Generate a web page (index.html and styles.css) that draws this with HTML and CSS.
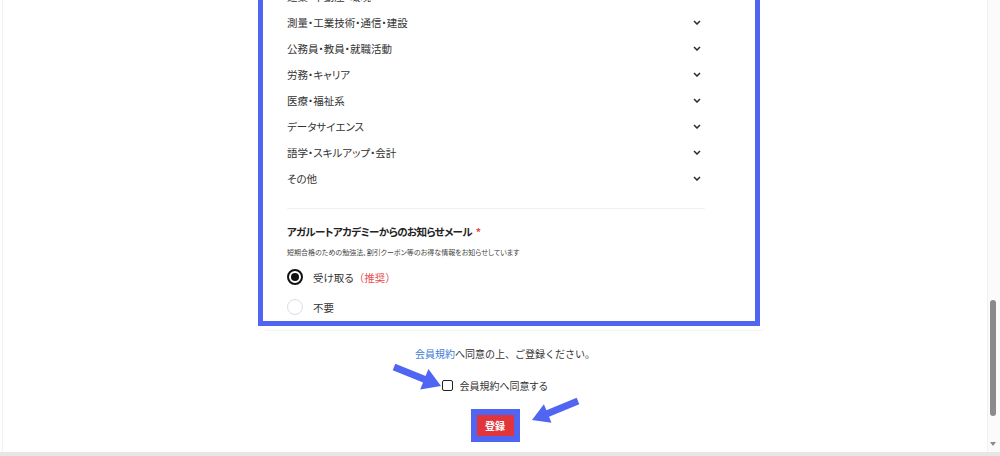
FILE: index.html
```html
<!DOCTYPE html>
<html lang="ja">
<head>
<meta charset="utf-8">
<title>会員登録</title>
<link rel="stylesheet" href="styles.css">
</head>
<body>
<div class="window">
  <div class="viewport">
    <div class="main">
      <div class="form-box">
        <div class="form-inner">
          <ul class="cats">
            <li class="cat"><span>建築・不動産・環境</span><svg class="chev" viewBox="0 0 8 5"><path d="M1 1 L4 4 L7 1"/></svg></li>
            <li class="cat"><span>測量・工業技術・通信・建設</span><svg class="chev" viewBox="0 0 8 5"><path d="M1 1 L4 4 L7 1"/></svg></li>
            <li class="cat"><span>公務員・教員・就職活動</span><svg class="chev" viewBox="0 0 8 5"><path d="M1 1 L4 4 L7 1"/></svg></li>
            <li class="cat"><span>労務・キャリア</span><svg class="chev" viewBox="0 0 8 5"><path d="M1 1 L4 4 L7 1"/></svg></li>
            <li class="cat"><span>医療・福祉系</span><svg class="chev" viewBox="0 0 8 5"><path d="M1 1 L4 4 L7 1"/></svg></li>
            <li class="cat"><span>データサイエンス</span><svg class="chev" viewBox="0 0 8 5"><path d="M1 1 L4 4 L7 1"/></svg></li>
            <li class="cat"><span>語学・スキルアップ・会計</span><svg class="chev" viewBox="0 0 8 5"><path d="M1 1 L4 4 L7 1"/></svg></li>
            <li class="cat"><span>その他</span><svg class="chev" viewBox="0 0 8 5"><path d="M1 1 L4 4 L7 1"/></svg></li>
          </ul>
          <div class="sep"></div>
          <h2 class="q-title">アガルートアカデミーからのお知らせメール <span class="req">*</span></h2>
          <p class="q-note">短期合格のための勉強法、割引クーポン等のお得な情報をお知らせしています</p>
          <div class="radio-row"><span class="radio on"><span class="dot"></span></span><span class="r-label">受け取る<span class="rec">（推奨）</span></span></div>
          <div class="radio-row second"><span class="radio"></span><span class="r-label">不要</span></div>
        </div>
      </div>
      <div class="card-edge"></div>
      <p class="agree-text"><span class="link">会員規約</span>へ同意の上、ご登録ください。</p>
      <div class="check-row"><span class="checkbox"></span><span class="c-label">会員規約へ同意する</span></div>
      <div class="btn-wrap"><div class="btn-outline"><span class="btn">登録</span></div></div>
    </div>
    <div class="scrollbar"><div class="thumb"></div><div class="arrow-down"></div></div>
  </div>
  <div class="bottom-strip"></div>
  <svg class="annot" viewBox="0 0 1000 456" width="1000" height="456">
    <polygon points="395.3,363.8 425.6,376.0 428.4,369.1 441,386 420.2,389.4 423.0,382.5 392.7,370.2"/>
    <polygon points="576.7,397.8 546.4,410.3 543.9,404.3 532,420 551.5,422.7 549.0,416.7 579.3,404.2"/>
  </svg>
</div>
</body>
</html>
```
FILE: styles.css
```css
html, body {
  margin: 0;
  padding: 0;
  background: #fff;
}
body {
  font-family: "Noto Sans CJK JP", "Noto Sans", sans-serif;
  color: #333;
  font-feature-settings: "palt";
}
.window {
  position: relative;
  width: 1000px;
  height: 456px;
  overflow: hidden;
}
.viewport {
  display: flex;
  height: 452px;
}
.main {
  width: 987px;
  height: 452px;
  overflow: hidden;
  border-left: 1px solid #f1f1f1;
  margin-left: 2px;
  box-sizing: border-box;
}
.form-box {
  margin-top: -22px;
  margin-left: 255px;
  width: 502px;
  box-sizing: border-box;
  border: 5px solid #5066f2;
  padding-bottom: 3px;
}
.form-inner {
  margin-left: 24px;
  width: 418px;
}
.cats {
  list-style: none;
  margin: 0;
  padding: 0;
}
.cat {
  height: 26px;
  display: flex;
  align-items: center;
  justify-content: space-between;
  padding-right: 4px;
  font-size: 10.5px;
  color: #333;
}
.chev {
  width: 8px;
  height: 5px;
  fill: none;
  stroke: #2b2b2b;
  stroke-width: 1.5;
}
.sep {
  margin-top: 17px;
  height: 1px;
  background: #f2f2f2;
}
.q-title {
  margin: 14px 0 0;
  font-size: 10.5px;
  letter-spacing: -0.6px;
  line-height: 18px;
  font-weight: 700;
  color: #222;
}
.req {
  color: #e54646;
  margin-left: 2px;
}
.q-note {
  margin: 6px 0 0;
  font-size: 7px;
  line-height: 10px;
  color: #444;
}
.radio-row {
  margin-top: 9px;
  height: 22px;
  display: flex;
  align-items: center;
}
.radio-row.second {
  margin-top: 8px;
}
.radio {
  width: 16px;
  height: 16px;
  box-sizing: border-box;
  border-radius: 50%;
  border: 1px solid #d8dee6;
  display: flex;
  align-items: center;
  justify-content: center;
}
.radio.on {
  border: 2px solid #111;
}
.dot {
  width: 8px;
  height: 8px;
  border-radius: 50%;
  background: #111;
}
.r-label {
  margin-left: 10px;
  font-size: 10.5px;
  color: #333;
}
.rec {
  color: #e8504f;
  font-feature-settings: normal;
}
.card-edge {
  margin: 4px 0 0 262px;
  width: 498px;
  height: 1px;
  background: #f3f3f3;
}
.agree-text {
  margin: 15px 0 0;
  text-align: center;
  font-size: 10px;
  line-height: 16px;
  padding-left: 20px;
  font-feature-settings: normal;
}
.link {
  color: #3a7bd5;
}
.check-row {
  margin-top: 15px;
  height: 16px;
  display: flex;
  align-items: center;
  justify-content: center;
  gap: 6px;
}
.checkbox {
  width: 11px;
  height: 11px;
  box-sizing: border-box;
  border: 1.5px solid #222;
  border-radius: 2px;
}
.c-label {
  font-size: 10px;
  color: #333;
}
.btn-wrap {
  margin-top: 16px;
  display: flex;
  justify-content: center;
}
.btn-outline {
  border: 6px solid #5066f2;
  display: flex;
}
.btn {
  width: 37px;
  height: 21px;
  background: #e2343b;
  color: #fff;
  font-weight: 700;
  font-size: 10px;
  display: flex;
  align-items: center;
  justify-content: center;
}
.scrollbar {
  width: 13px;
  height: 452px;
  position: relative;
  background: #fbfbfb;
  border-left: 1px solid #f0f0f0;
  box-sizing: border-box;
}
.thumb {
  position: absolute;
  left: 2px;
  top: 300px;
  width: 6px;
  height: 116px;
  border-radius: 3px;
  background: #8b8b8b;
}
.arrow-down {
  position: absolute;
  left: 2px;
  top: 442px;
  width: 0;
  height: 0;
  border-left: 3.5px solid transparent;
  border-right: 3.5px solid transparent;
  border-top: 4px solid #8b8b8b;
}
.bottom-strip {
  height: 4px;
  background: #e6e6e6;
}
.annot {
  position: absolute;
  left: 0;
  top: 0;
  pointer-events: none;
  fill: #5066f2;
}
```
